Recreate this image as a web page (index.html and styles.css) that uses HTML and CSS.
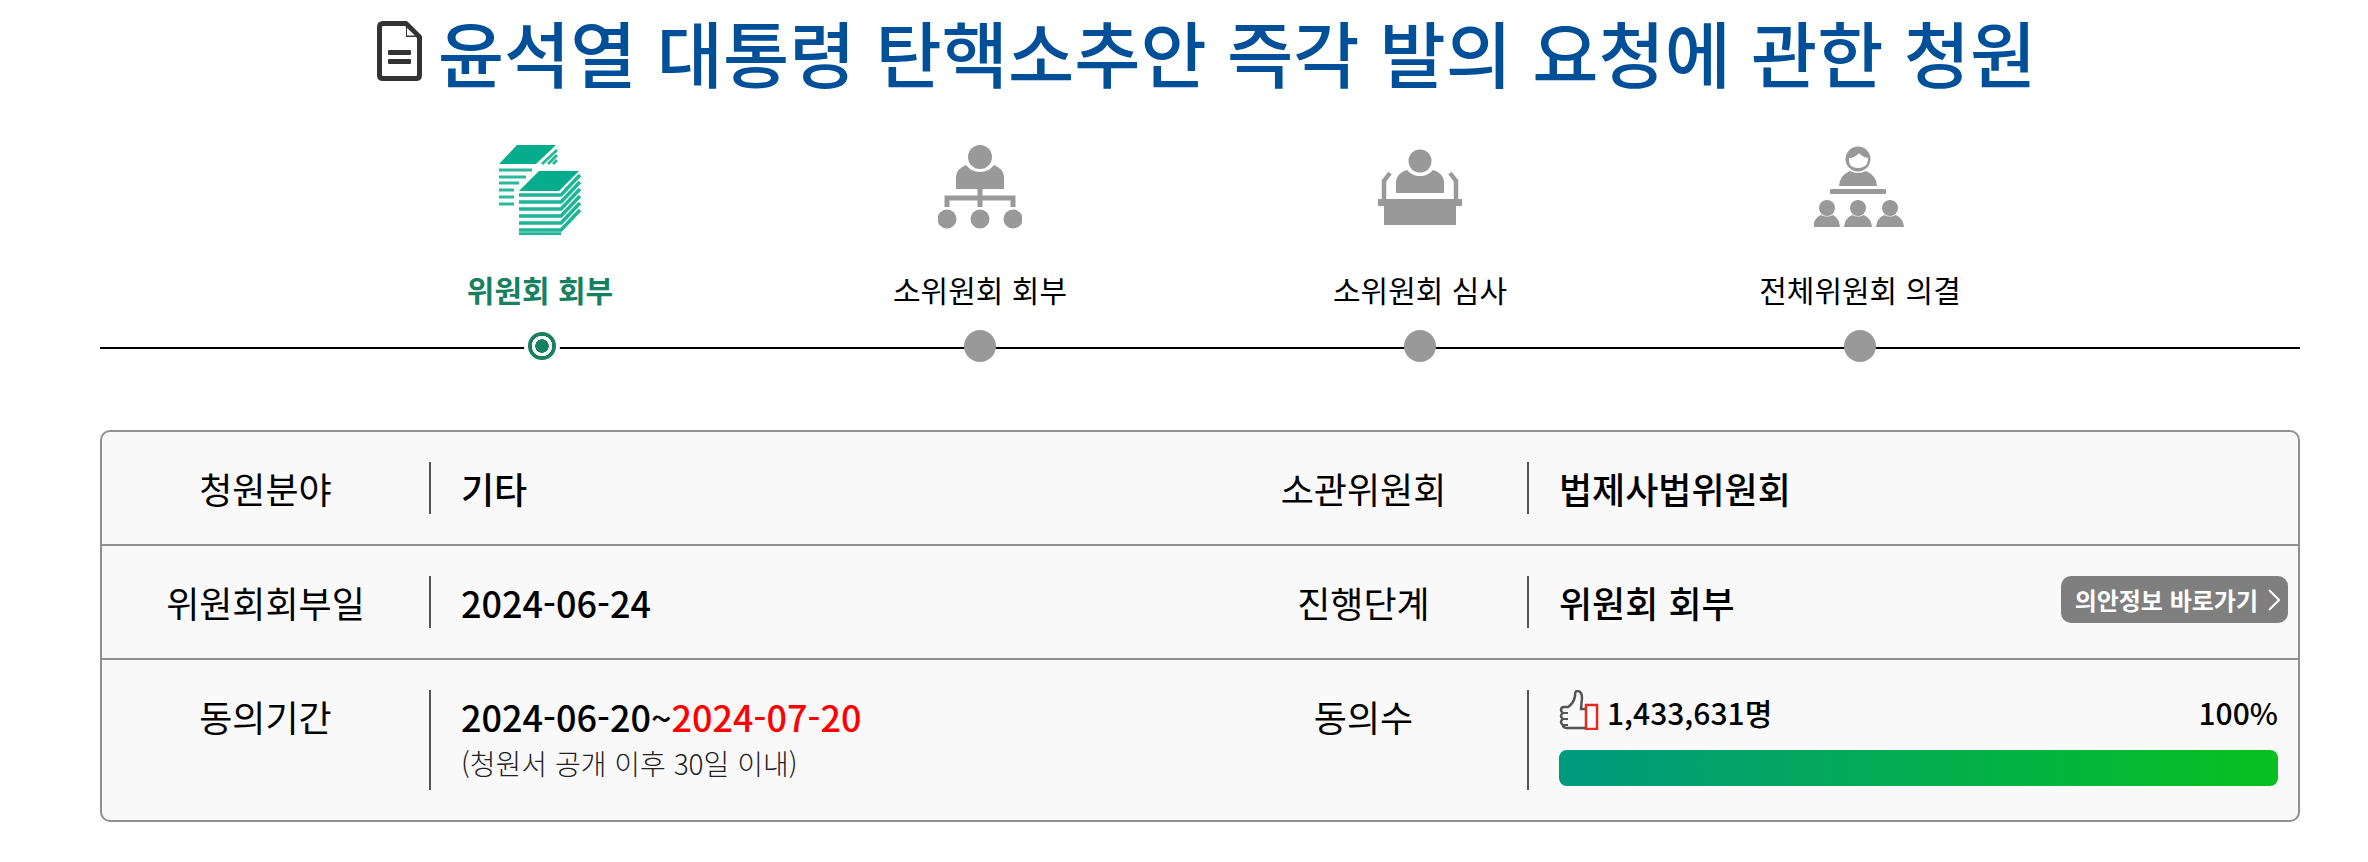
FILE: index.html
```html
<!DOCTYPE html>
<html lang="ko">
<head>
    <meta name="viewport" content="width=device-width, initial-scale=1">
    <title>청원 상세</title>
    <link rel="stylesheet" href="styles.css">
</head>
<body>
    <!-- Title -->
    <h1 class="title">
        <svg class="title-icon" viewBox="0 0 45 60"><path d="M6 2.500H29L42.500 16V54Q42.500 57.500 39 57.500H6Q2.500 57.500 2.500 54V6Q2.500 2.500 6 2.500Z" fill="#fff" stroke="#333" stroke-width="5" stroke-linejoin="round"/><path d="M29 3V16H42Z" fill="#333"/><path d="M30 7V14.500H38Z" fill="#fff"/><rect x="11" y="29" width="23" height="5" rx="1" fill="#333"/><rect x="11" y="38" width="23" height="5" rx="1" fill="#333"/></svg>
        <span>윤석열 대통령 탄핵소추안 즉각 발의 요청에 관한 청원</span>
    </h1>

    <!-- Progress steps -->
    <div class="steps">
        <div class="step step-active">
            <svg class="step-icon" viewBox="0 0 82 90">
                <path d="M0 19L18 0H57L37 19Z" fill="#05ad8c"/>
                <path d="M0 25H33M0 32H27M0 38H20M0 45H15M0 52H15M0 59H15M43 19L58 5M49 19L58 10M54 19L58 15" stroke="#05ad8c" stroke-width="3" fill="none" opacity="0.85"/>
                <path d="M20 46L40 26H80L60 46Z" fill="#05ad8c"/>
                <path d="M20 50H62L81 30M20 57H62L81 37M20 64H62L81 44M20 71H62L81 51M20 78H62L81 58M20 85H62L81 65M20 89H62" stroke="#05ad8c" stroke-width="3.500" fill="none" opacity="0.9"/>
            </svg>
            <div class="step-name">위원회 회부</div>
            <div class="dot dot-on"></div>
        </div>
        <div class="step">
            <svg class="step-icon" viewBox="0 0 84 90">
                <circle cx="42" cy="12" r="12" fill="#999"/>
                <path d="M18 44V32Q18 24 28 20Q33 27 42 27Q51 27 56 20Q66 24 66 32V44Z" fill="#999"/>
                <path d="M42 44V62M9 62V53H75V62" stroke="#999" stroke-width="5" fill="none"/>
                <circle cx="9" cy="74" r="9.500" fill="#999"/><circle cx="42" cy="74" r="9.500" fill="#999"/><circle cx="75" cy="74" r="9.500" fill="#999"/>
            </svg>
            <div class="step-name">소위원회 회부</div>
            <div class="dot"></div>
        </div>
        <div class="step">
            <svg class="step-icon" viewBox="0 0 84 90">
                <circle cx="42" cy="16" r="11.500" fill="#999"/>
                <path d="M18 48V36Q19 28 29 25Q34 31 42 31Q50 31 55 25Q65 28 66 36V48Z" fill="#999"/>
                <path d="M6 54V36L12 28M78 54V36L72 28" stroke="#999" stroke-width="4.500" fill="none"/>
                <path d="M0 54H84V61H78V80H6V61H0Z" fill="#999"/>
            </svg>
            <div class="step-name">소위원회 심사</div>
            <div class="dot"></div>
        </div>
        <div class="step">
            <svg class="step-icon step-icon-wide" viewBox="2 0 92 90">
                <circle cx="46" cy="14" r="12.500" fill="#999"/>
                <path d="M37 13Q43 13 47 8Q50 12 56 13V15Q55 23 46 23Q37 23 37 15Z" fill="#fff"/>
                <path d="M27 41Q27 31 38 26Q42 28 46 28Q50 28 54 26Q65 31 65 41Z" fill="#999"/>
                <rect x="18" y="44" width="56" height="5" rx="1" fill="#999"/>
                <circle cx="15" cy="63" r="8" fill="#999"/><circle cx="46" cy="63" r="8" fill="#999"/><circle cx="78" cy="63" r="8" fill="#999"/>
                <path d="M1 82Q2 73 9 70Q15 73 21 70Q27 73 28 82ZM32 82Q33 73 40 70Q46 73 52 70Q59 73 60 82ZM64 82Q65 73 72 70Q78 73 84 70Q91 73 92 82Z" fill="#999"/>
            </svg>
            <div class="step-name">전체위원회 의결</div>
            <div class="dot"></div>
        </div>
    </div>

    <!-- Summary table -->
    <div class="info">
        <div class="info-row">
            <div class="info-label">청원분야</div>
            <div class="info-value">기타</div>
            <div class="info-label">소관위원회</div>
            <div class="info-value">법제사법위원회</div>
        </div>
        <div class="info-row">
            <div class="info-label">위원회회부일</div>
            <div class="info-value">2024-06-24</div>
            <div class="info-label">진행단계</div>
            <div class="info-value info-value-split">
                <span>위원회 회부</span>
                <a class="link-btn" href="#">의안정보 바로가기
                    <svg class="link-arrow" viewBox="0 0 12 22"><path d="M1 1L11 11L1 21" fill="none" stroke="#fff" stroke-width="2"/></svg>
                </a>
            </div>
        </div>
        <div class="info-row">
            <div class="info-label">동의기간</div>
            <div class="info-value">
                <div>2024-06-20~<span class="date-end">2024-07-20</span></div>
                <div class="note">(청원서 공개 이후 30일 이내)</div>
            </div>
            <div class="info-label">동의수</div>
            <div class="info-value">
                <div class="count-line">
                    <svg class="thumb" viewBox="0 0 40 40">
                        <path d="M27 19H22L23 8Q23 1 18 1Q16 1 16 6Q15 13 9 17H5Q2 17 2 20Q2 22 4 23Q2 24 2 26Q2 28 4 29Q2 30 2 32Q2 34 4 35V36Q5 38 8 38H26" fill="none" stroke="#555" stroke-width="2.500"/>
                        <path d="M3 23H9M3 29H9M4 35H9" stroke="#555" stroke-width="2"/>
                        <rect x="27" y="15" width="11" height="24" fill="#fff" stroke="#e8291c" stroke-width="2.500"/>
                    </svg>
                    <span class="count">1,433,631명</span>
                    <span class="percent">100%</span>
                </div>
                <div class="bar"><div class="bar-fill" style="width: 100%"></div></div>
            </div>
        </div>
    </div>
</body>
</html>
```

FILE: styles.css
```css
/* Page */
body {
    margin: 0;
    padding: 0 68px 0 100px;
    background-color: #fff;
    color: #000;
    font-family: "Noto Sans CJK KR", "Noto Sans", sans-serif;
}

/* Title */
.title {
    display: flex;
    justify-content: center;
    align-items: center;
    gap: 16px;
    margin: 0;
    padding-left: 13px;
    height: 102px;
    color: #004f99;
    font-size: 72px;
    font-weight: 500;
    line-height: 102px;
}

.title-icon {
    width: 45px;
    height: 60px;
}

/* Steps */
.steps {
    display: flex;
    height: 272px;
    padding-top: 43px;
    box-sizing: border-box;
    padding-left: 220px;
    margin-bottom: 56px;
    background: linear-gradient(#000, #000) 0 245px / 100% 2px no-repeat;
}

.step {
    display: flex;
    flex-direction: column;
    align-items: center;
    width: 440px;
}

.step-icon {
    width: 84px;
    height: 90px;
}

.step-icon-wide {
    width: 92px;
}

.step-name {
    margin-top: 32px;
    font-size: 30px;
    line-height: 44px;
}

.step-active .step-name {
    color: #16805f;
    font-weight: 700;
}

.dot {
    width: 32px;
    height: 32px;
    margin-top: 19px;
    border-radius: 50%;
    background-color: #999;
}

.dot-on {
    box-sizing: border-box;
    width: 36px;
    height: 36px;
    margin-top: 17px;
    margin-left: 4px;
    border: 4px solid #fff;
    background-color: #16805f;
    background-image: radial-gradient(circle, #16805f 0 6.500px, #fff 7px 10px, #16805f 10.500px);
}

/* Summary table */
.info {
    border: 2px solid #909090;
    border-radius: 10px;
    background-color: #f9f9f9;
}

.info-row {
    display: grid;
    grid-template-columns: 327px 771px 327px 1fr;
    padding: 30px 0;
    border-bottom: 2px solid #909090;
}

.info-row:last-child {
    border-bottom: 0;
}

.info-label {
    font-size: 36px;
    line-height: 52px;
    text-align: center;
}

.info-value {
    min-height: 52px;
    padding: 0 20px 0 30px;
    border-left: 2px solid #555;
    font-size: 36px;
    font-weight: 500;
    line-height: 52px;
}

.info-value-split {
    display: flex;
    justify-content: space-between;
    align-items: flex-start;
    padding-right: 10px;
}

.link-btn {
    display: flex;
    align-items: center;
    gap: 10px;
    height: 47px;
    padding: 0 8px 0 14px;
    border-radius: 10px;
    background-color: #7f7f7f;
    color: #fff;
    font-size: 24px;
    font-weight: 700;
    line-height: 47px;
    text-decoration: none;
}

.link-arrow {
    width: 12px;
    height: 22px;
}

.date-end {
    color: #f00;
}

.note {
    color: #222;
    font-size: 28px;
    font-weight: 300;
    line-height: 42px;
}

.count-line {
    display: flex;
    align-items: flex-start;
    height: 44px;
    font-size: 30px;
    font-weight: 500;
    line-height: 44px;
}

.thumb {
    width: 40px;
    height: 40px;
    margin-right: 8px;
}

.percent {
    margin-left: auto;
}

.bar {
    height: 36px;
    margin: 16px 0 4px;
    border-radius: 8px;
    background-color: #eee;
}

.bar-fill {
    height: 100%;
    border-radius: 8px;
    background: linear-gradient(to right, #009a80, #07c01f);
}
```
